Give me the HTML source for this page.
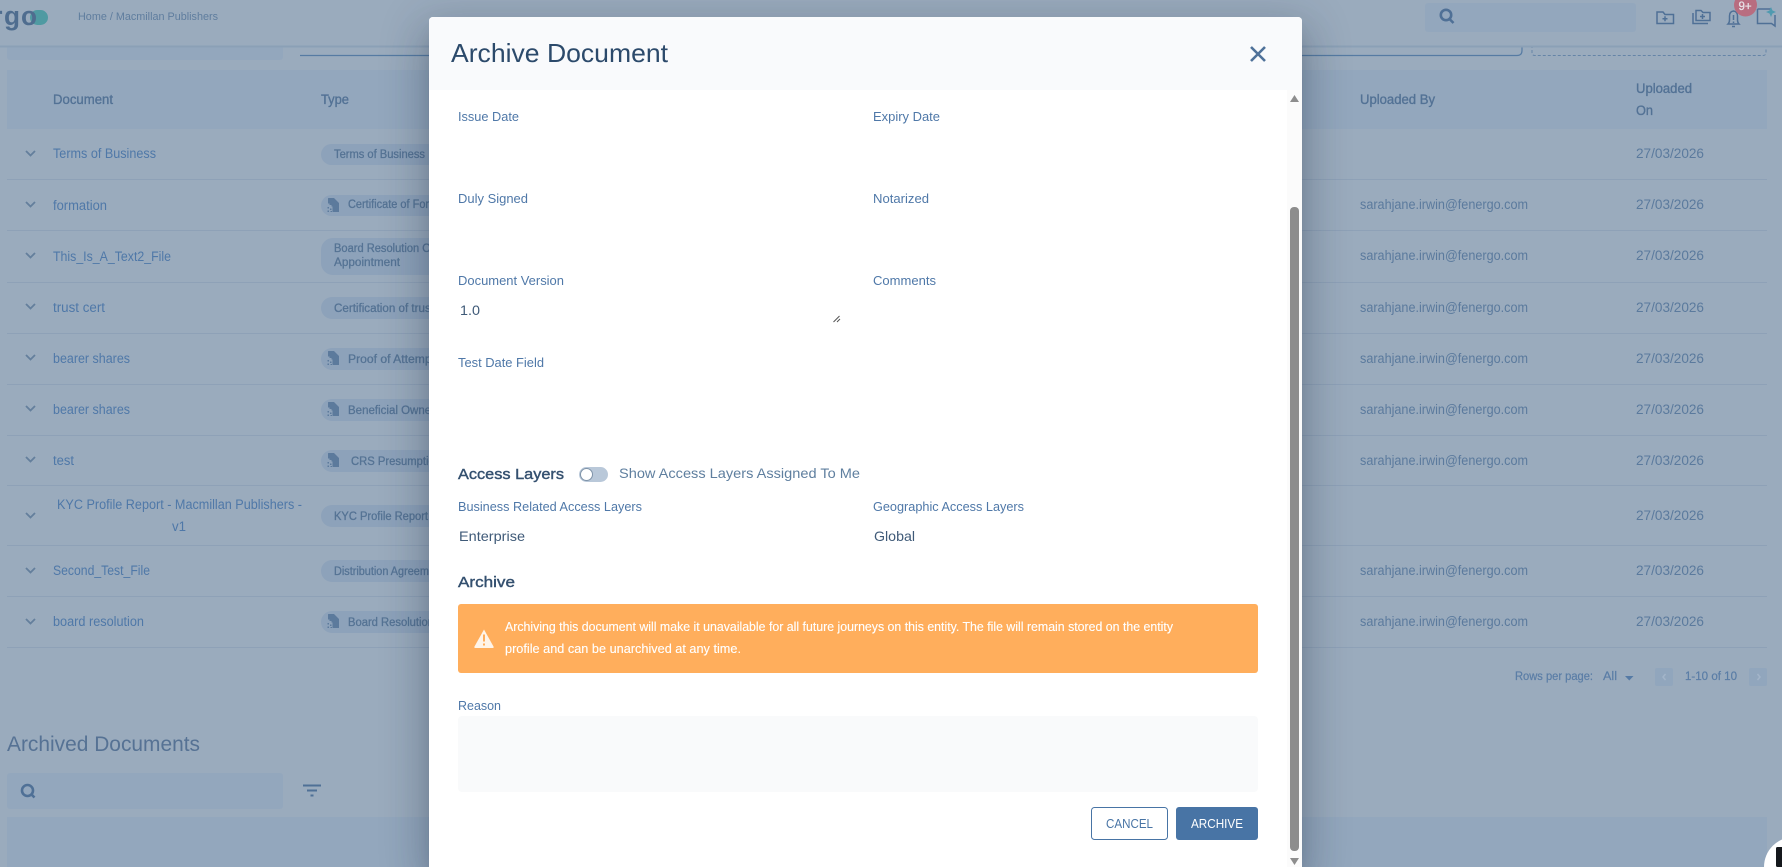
<!DOCTYPE html>
<html lang="en">
<head>
<meta charset="utf-8">
<title>Archive Document</title>
<style>
html,body{margin:0;padding:0;width:1782px;height:867px;overflow:hidden;background:#9aabbd}
#root{position:relative;width:1782px;height:867px;overflow:hidden;background:#9aabbd}
svg{position:absolute;left:0;top:0;display:block}
text{font-family:"Liberation Sans",Arial,sans-serif}
.m{font-size:13px;fill:#4f78a8}
.h{font-size:13.5px;fill:#537295;stroke:#537295;stroke-width:.35px}
.d{font-size:13.5px;fill:#5b7a9d}
.n{font-size:13.5px;fill:#4f78a8}
.c{font-size:11.5px;fill:#557394;stroke:#557394;stroke-width:.3px}
.v{font-size:14px;fill:#3f5a78}
.b{font-size:15px;fill:#34506f;stroke:#34506f;stroke-width:.4px}
.p{font-size:11.5px;fill:#5a7da6;stroke:#5a7da6;stroke-width:.2px}
.w{font-size:12.5px;fill:#fff;stroke:#fff;stroke-width:.12px}
#modal{position:absolute;left:429px;top:17px;width:873px;height:850px;background:#fff;border-radius:4px 4px 0 0;box-shadow:0 11px 15px -7px rgba(30,45,65,.25),0 24px 38px 3px rgba(30,45,65,.18),0 9px 46px 8px rgba(30,45,65,.16)}
#mh{position:absolute;left:0;top:0;width:100%;height:73px;background:#f9fafc;border-radius:4px 4px 0 0}
#st{position:absolute;right:0;top:73px;width:15px;height:777px;background:#fbfbfb}
</style>
</head>
<body>
<div id="root">
<svg width="1782" height="867" viewBox="0 0 1782 867" xmlns="http://www.w3.org/2000/svg">
<rect x="7" y="30" width="276" height="30" rx="3" fill="#93a7bd"/>
<path d="M300 55.500H1517q5 0 5-5V40" fill="none" stroke="#567ba3" stroke-width="1.200"/>
<path d="M1532 40V52.500q0 3 3 3H1763q3 0 3-3V40" fill="none" stroke="#6584a7" stroke-width="1" stroke-dasharray="3 2"/>
<rect x="0" y="0" width="1782" height="46" fill="#9aabbd"/>
<rect x="0" y="45.500" width="1782" height="2" fill="#8ba0b6"/>
<rect x="30" y="10" width="18" height="15" rx="7.500" fill="#4f9aa2"/>
<text x="-8" y="25" font-size="27" font-weight="700" fill="#4f6d8f">r</text>
<text x="4" y="25" font-size="27" font-weight="700" fill="#4f6d8f" textLength="16" lengthAdjust="spacingAndGlyphs">g</text>
<text x="21" y="25" font-size="27" font-weight="700" fill="#4f6d8f" textLength="16" lengthAdjust="spacingAndGlyphs">o</text>
<text x="78" y="20" font-size="11" fill="#5f7d9e" textLength="140" lengthAdjust="spacingAndGlyphs">Home / Macmillan Publishers</text>
<rect x="1425" y="3" width="211" height="29" rx="3" fill="#93a7bd"/>
<g fill="none" stroke="#4f7096" stroke-width="2.600"><circle cx="1446" cy="15" r="5.200"/><path d="M1450 19.500l3.500 3.500"/></g>
<g fill="none" stroke="#4f7096" stroke-width="1.500">
<g transform="translate(7 0)"><path d="M1650 12h6l2 2.500h8.500v9H1650z"/><path d="M1655.500 18.800h5M1658 16.300v5"/></g>
<g transform="translate(7 0)"><path d="M1686 13v10.500h15"/><path d="M1689 10.500h5l2 2h7v8h-14z"/><path d="M1693 16.500h5M1695.500 14v5"/></g>
<g transform="translate(8 0)"><path d="M1720 24q1.500-1.500 1.500-4v-4q0-4.500 4-5q4 .5 4 5v4q0 2.500 1.500 4z"/><path d="M1724 26.500h3"/><path d="M1725.500 15v5M1725.500 21.500v1.500"/></g>
<g transform="translate(9 0)"><path d="M1748.500 9h13M1748.500 9v14.500h14l3.500 2.500v-11"/></g>
</g>
<circle cx="1745.500" cy="5" r="11.500" fill="#b86d80"/>
<text x="1738.500" y="10" font-size="11.500" fill="#e6dfe5" stroke="#e6dfe5" stroke-width=".3">9+</text>
<path d="M1771 7l1.500 3.500 3.500 1.500-3.500 1.500-1.500 3.500-1.500-3.500-3.500-1.500 3.500-1.500z" fill="#4f9ab0"/>
<rect x="7" y="70" width="1760" height="59" fill="#93a7bd"/>
<text class="h" x="53" y="104" textLength="60" lengthAdjust="spacingAndGlyphs">Document</text>
<text class="h" x="321" y="104" textLength="28" lengthAdjust="spacingAndGlyphs">Type</text>
<text class="h" x="1360" y="104" textLength="75" lengthAdjust="spacingAndGlyphs">Uploaded By</text>
<text class="h" x="1636" y="93" textLength="56" lengthAdjust="spacingAndGlyphs">Uploaded</text>
<text class="h" x="1636" y="115" textLength="17" lengthAdjust="spacingAndGlyphs">On</text>
<g stroke="#8ea1b7" stroke-width="1">
<path d="M7 179.500H1767M7 230.500H1767M7 282.500H1767M7 333.500H1767M7 384.500H1767M7 435.500H1767M7 485.500H1767M7 545.500H1767M7 596.500H1767M7 647.500H1767"/>
</g>
<g fill="none" stroke="#647f9c" stroke-width="1.800" transform="translate(-1 0)">
<path d="M27 151l4.500 4.500 4.500-4.500M27 202l4.500 4.500 4.500-4.500M27 253l4.500 4.500 4.500-4.500M27 304l4.500 4.500 4.500-4.500M27 355l4.500 4.500 4.500-4.500M27 406l4.500 4.500 4.500-4.500M27 457l4.500 4.500 4.500-4.500M27 513l4.500 4.500 4.500-4.500M27 568l4.500 4.500 4.500-4.500M27 619l4.500 4.500 4.500-4.500"/>
</g>
<text class="n" x="53" y="158" textLength="103" lengthAdjust="spacingAndGlyphs">Terms of Business</text>
<text class="n" x="53" y="210" textLength="54" lengthAdjust="spacingAndGlyphs">formation</text>
<text class="n" x="53" y="261" textLength="118" lengthAdjust="spacingAndGlyphs">This_Is_A_Text2_File</text>
<text class="n" x="53" y="312" textLength="52" lengthAdjust="spacingAndGlyphs">trust cert</text>
<text class="n" x="53" y="363" textLength="77" lengthAdjust="spacingAndGlyphs">bearer shares</text>
<text class="n" x="53" y="414" textLength="77" lengthAdjust="spacingAndGlyphs">bearer shares</text>
<text class="n" x="53" y="465" textLength="21" lengthAdjust="spacingAndGlyphs">test</text>
<text class="n" x="57" y="509" textLength="245" lengthAdjust="spacingAndGlyphs">KYC Profile Report - Macmillan Publishers -</text>
<text class="n" x="172" y="531" textLength="14" lengthAdjust="spacingAndGlyphs">v1</text>
<text class="n" x="53" y="575" textLength="97" lengthAdjust="spacingAndGlyphs">Second_Test_File</text>
<text class="n" x="53" y="626" textLength="91" lengthAdjust="spacingAndGlyphs">board resolution</text>
<g fill="#8da2ba">
<rect x="321" y="144" width="130" height="21" rx="10.500"/>
<rect x="321" y="195" width="130" height="21" rx="10.500"/>
<rect x="321" y="238" width="130" height="37" rx="12"/>
<rect x="321" y="297" width="130" height="22" rx="11"/>
<rect x="321" y="348" width="130" height="22" rx="11"/>
<rect x="321" y="399" width="130" height="22" rx="11"/>
<rect x="321" y="450" width="130" height="22" rx="11"/>
<rect x="321" y="505" width="130" height="22" rx="11"/>
<rect x="321" y="560" width="130" height="22" rx="11"/>
<rect x="321" y="611" width="130" height="22" rx="11"/>
</g>
<g fill="#5c7a9c">
<g id="ic"><path d="M329 198h5l5 5v9h-6.500v-5.500h-1v-1.500h-2v-1.500h-1.500v-5q0-.5.500-.500z"/><path d="M327.500 207h1.500v1.500h-1.500zM330 208.500h1.500v1.500h-1.500zM327.500 210.500h1.500v1.500h-1.500zM330.500 211h1.500v1h-1.500z"/></g>
<use href="#ic" y="153"/><use href="#ic" y="204"/><use href="#ic" y="255"/><use href="#ic" y="416"/>
</g>
<text class="c" x="334" y="158" textLength="91" lengthAdjust="spacingAndGlyphs">Terms of Business</text>
<text class="c" x="348" y="208" textLength="114" lengthAdjust="spacingAndGlyphs">Certificate of Formation</text>
<text class="c" x="334" y="252" textLength="100" lengthAdjust="spacingAndGlyphs">Board Resolution Of</text>
<text class="c" x="334" y="266" textLength="66" lengthAdjust="spacingAndGlyphs">Appointment</text>
<text class="c" x="334" y="312" textLength="100" lengthAdjust="spacingAndGlyphs">Certification of trust</text>
<text class="c" x="348" y="363" textLength="87" lengthAdjust="spacingAndGlyphs">Proof of Attempt</text>
<text class="c" x="348" y="414" textLength="87" lengthAdjust="spacingAndGlyphs">Beneficial Owner</text>
<text class="c" x="351" y="465" textLength="90" lengthAdjust="spacingAndGlyphs">CRS Presumption</text>
<text class="c" x="334" y="520" textLength="94" lengthAdjust="spacingAndGlyphs">KYC Profile Report</text>
<text class="c" x="334" y="575" textLength="110" lengthAdjust="spacingAndGlyphs">Distribution Agreement</text>
<text class="c" x="348" y="626" textLength="86" lengthAdjust="spacingAndGlyphs">Board Resolution</text>
<text class="d" x="1636" y="158" textLength="68" lengthAdjust="spacingAndGlyphs">27/03/2026</text>
<text class="d" x="1636" y="209" textLength="68" lengthAdjust="spacingAndGlyphs">27/03/2026</text>
<text class="d" x="1636" y="260" textLength="68" lengthAdjust="spacingAndGlyphs">27/03/2026</text>
<text class="d" x="1636" y="312" textLength="68" lengthAdjust="spacingAndGlyphs">27/03/2026</text>
<text class="d" x="1636" y="363" textLength="68" lengthAdjust="spacingAndGlyphs">27/03/2026</text>
<text class="d" x="1636" y="414" textLength="68" lengthAdjust="spacingAndGlyphs">27/03/2026</text>
<text class="d" x="1636" y="465" textLength="68" lengthAdjust="spacingAndGlyphs">27/03/2026</text>
<text class="d" x="1636" y="520" textLength="68" lengthAdjust="spacingAndGlyphs">27/03/2026</text>
<text class="d" x="1636" y="575" textLength="68" lengthAdjust="spacingAndGlyphs">27/03/2026</text>
<text class="d" x="1636" y="626" textLength="68" lengthAdjust="spacingAndGlyphs">27/03/2026</text>
<text class="d" x="1360" y="209" textLength="168" lengthAdjust="spacingAndGlyphs">sarahjane.irwin@fenergo.com</text>
<text class="d" x="1360" y="260" textLength="168" lengthAdjust="spacingAndGlyphs">sarahjane.irwin@fenergo.com</text>
<text class="d" x="1360" y="312" textLength="168" lengthAdjust="spacingAndGlyphs">sarahjane.irwin@fenergo.com</text>
<text class="d" x="1360" y="363" textLength="168" lengthAdjust="spacingAndGlyphs">sarahjane.irwin@fenergo.com</text>
<text class="d" x="1360" y="414" textLength="168" lengthAdjust="spacingAndGlyphs">sarahjane.irwin@fenergo.com</text>
<text class="d" x="1360" y="465" textLength="168" lengthAdjust="spacingAndGlyphs">sarahjane.irwin@fenergo.com</text>
<text class="d" x="1360" y="575" textLength="168" lengthAdjust="spacingAndGlyphs">sarahjane.irwin@fenergo.com</text>
<text class="d" x="1360" y="626" textLength="168" lengthAdjust="spacingAndGlyphs">sarahjane.irwin@fenergo.com</text>
<text class="p" x="1515" y="680" textLength="78" lengthAdjust="spacingAndGlyphs">Rows per page:</text>
<text class="p" x="1603" y="680" textLength="14" lengthAdjust="spacingAndGlyphs">All</text>
<path d="M1625 676h8.500l-4.250 4.500z" fill="#557aa5"/>
<rect x="1655" y="668" width="18" height="18" rx="2" fill="#91a6bd"/>
<path d="M1665.500 674l-2.500 3 2.500 3" fill="none" stroke="#a3b5c9" stroke-width="1.500"/>
<text class="p" x="1685" y="680" textLength="52" lengthAdjust="spacingAndGlyphs">1-10 of 10</text>
<rect x="1749" y="668" width="18" height="18" rx="2" fill="#91a6bd"/>
<path d="M1757.500 674l2.500 3-2.500 3" fill="none" stroke="#a3b5c9" stroke-width="1.500"/>
<text x="7" y="751" font-size="21" fill="#567294" textLength="193" lengthAdjust="spacingAndGlyphs">Archived Documents</text>
<rect x="7" y="773" width="276" height="36" rx="3" fill="#93a7bd"/>
<g fill="none" stroke="#4f7096" stroke-width="2.600"><circle cx="27.500" cy="790.500" r="5.500"/><path d="M32 795l2.500 2.500"/></g>
<path d="M303 785.500h18M307 790.500h10M310.500 795.500h3" stroke="#4f7096" stroke-width="2" fill="none"/>
<rect x="7" y="817" width="1760" height="50" fill="#93a7bd"/>
<circle cx="1794" cy="867" r="30" fill="#fff"/>
<rect x="1776" y="847" width="8" height="20" rx="1.500" fill="#15181c"/>
</svg>

<div id="modal"><div id="mh"></div><div id="st"></div></div>

<svg width="1782" height="867" viewBox="0 0 1782 867" xmlns="http://www.w3.org/2000/svg">
<text x="451" y="62" font-size="26" fill="#2c4a6b" textLength="217" lengthAdjust="spacingAndGlyphs">Archive Document</text>
<path d="M1251 47l14 14M1265 47l-14 14" stroke="#4f7199" stroke-width="2.600" fill="none"/>
<path d="M1290 102l4.500-7 4.500 7z" fill="#8d8d8d"/>
<rect x="1290" y="207" width="9" height="644" rx="4" fill="#8d8d8d"/>
<path d="M1290 858h9l-4.500 7z" fill="#8d8d8d"/>
<text class="m" x="458" y="121" textLength="61" lengthAdjust="spacingAndGlyphs">Issue Date</text>
<text class="m" x="873" y="121" textLength="67" lengthAdjust="spacingAndGlyphs">Expiry Date</text>
<text class="m" x="458" y="203" textLength="70" lengthAdjust="spacingAndGlyphs">Duly Signed</text>
<text class="m" x="873" y="203" textLength="56" lengthAdjust="spacingAndGlyphs">Notarized</text>
<text class="m" x="458" y="285" textLength="106" lengthAdjust="spacingAndGlyphs">Document Version</text>
<text class="m" x="873" y="285" textLength="63" lengthAdjust="spacingAndGlyphs">Comments</text>
<text class="v" x="460" y="315" textLength="20" lengthAdjust="spacingAndGlyphs">1.0</text>
<path d="M833.500 322l6-6M837 322l3-3" stroke="#555" stroke-width="1" fill="none"/>
<text class="m" x="458" y="367" textLength="86" lengthAdjust="spacingAndGlyphs">Test Date Field</text>
<text class="b" x="458" y="479" textLength="106" lengthAdjust="spacingAndGlyphs">Access Layers</text>
<rect x="579" y="467" width="29" height="15" rx="7.500" fill="#b9c8d9"/>
<circle cx="586.500" cy="474.500" r="6" fill="#fff" stroke="#7f93a8" stroke-width="1"/>
<text x="619" y="478" font-size="14" fill="#5f7f9f" textLength="241" lengthAdjust="spacingAndGlyphs">Show Access Layers Assigned To Me</text>
<text class="m" x="458" y="511" textLength="184" lengthAdjust="spacingAndGlyphs">Business Related Access Layers</text>
<text class="m" x="873" y="511" textLength="151" lengthAdjust="spacingAndGlyphs">Geographic Access Layers</text>
<text class="v" x="459" y="541" textLength="66" lengthAdjust="spacingAndGlyphs">Enterprise</text>
<text class="v" x="874" y="541" textLength="41" lengthAdjust="spacingAndGlyphs">Global</text>
<text class="b" x="458" y="587" textLength="57" lengthAdjust="spacingAndGlyphs">Archive</text>
<rect x="458" y="604" width="800" height="69" rx="3" fill="#ffae5c"/>
<path d="M484 629.500l9.500 17q.6 1.500-1 1.500h-17q-1.600 0-1-1.500z" fill="#fff4e8"/>
<path d="M484 634.500v7M484 643.500v2" stroke="#ffae5c" stroke-width="2" fill="none"/>
<text class="w" x="505" y="631" textLength="668" lengthAdjust="spacingAndGlyphs">Archiving this document will make it unavailable for all future journeys on this entity. The file will remain stored on the entity</text>
<text class="w" x="505" y="653" textLength="236" lengthAdjust="spacingAndGlyphs">profile and can be unarchived at any time.</text>
<text class="m" x="458" y="710" textLength="43" lengthAdjust="spacingAndGlyphs">Reason</text>
<rect x="458" y="716" width="800" height="76" rx="4" fill="#f9fafb"/>
<rect x="1091.500" y="807.500" width="76" height="32" rx="3" fill="#fff" stroke="#4874a5"/>
<text x="1106" y="828" font-size="12.500" fill="#4874a5" textLength="47" lengthAdjust="spacingAndGlyphs">CANCEL</text>
<rect x="1176" y="807" width="82" height="33" rx="3" fill="#4874a5"/>
<text x="1191" y="828" font-size="12.500" fill="#fff" textLength="52" lengthAdjust="spacingAndGlyphs">ARCHIVE</text>
</svg>
</div>
</body>
</html>
